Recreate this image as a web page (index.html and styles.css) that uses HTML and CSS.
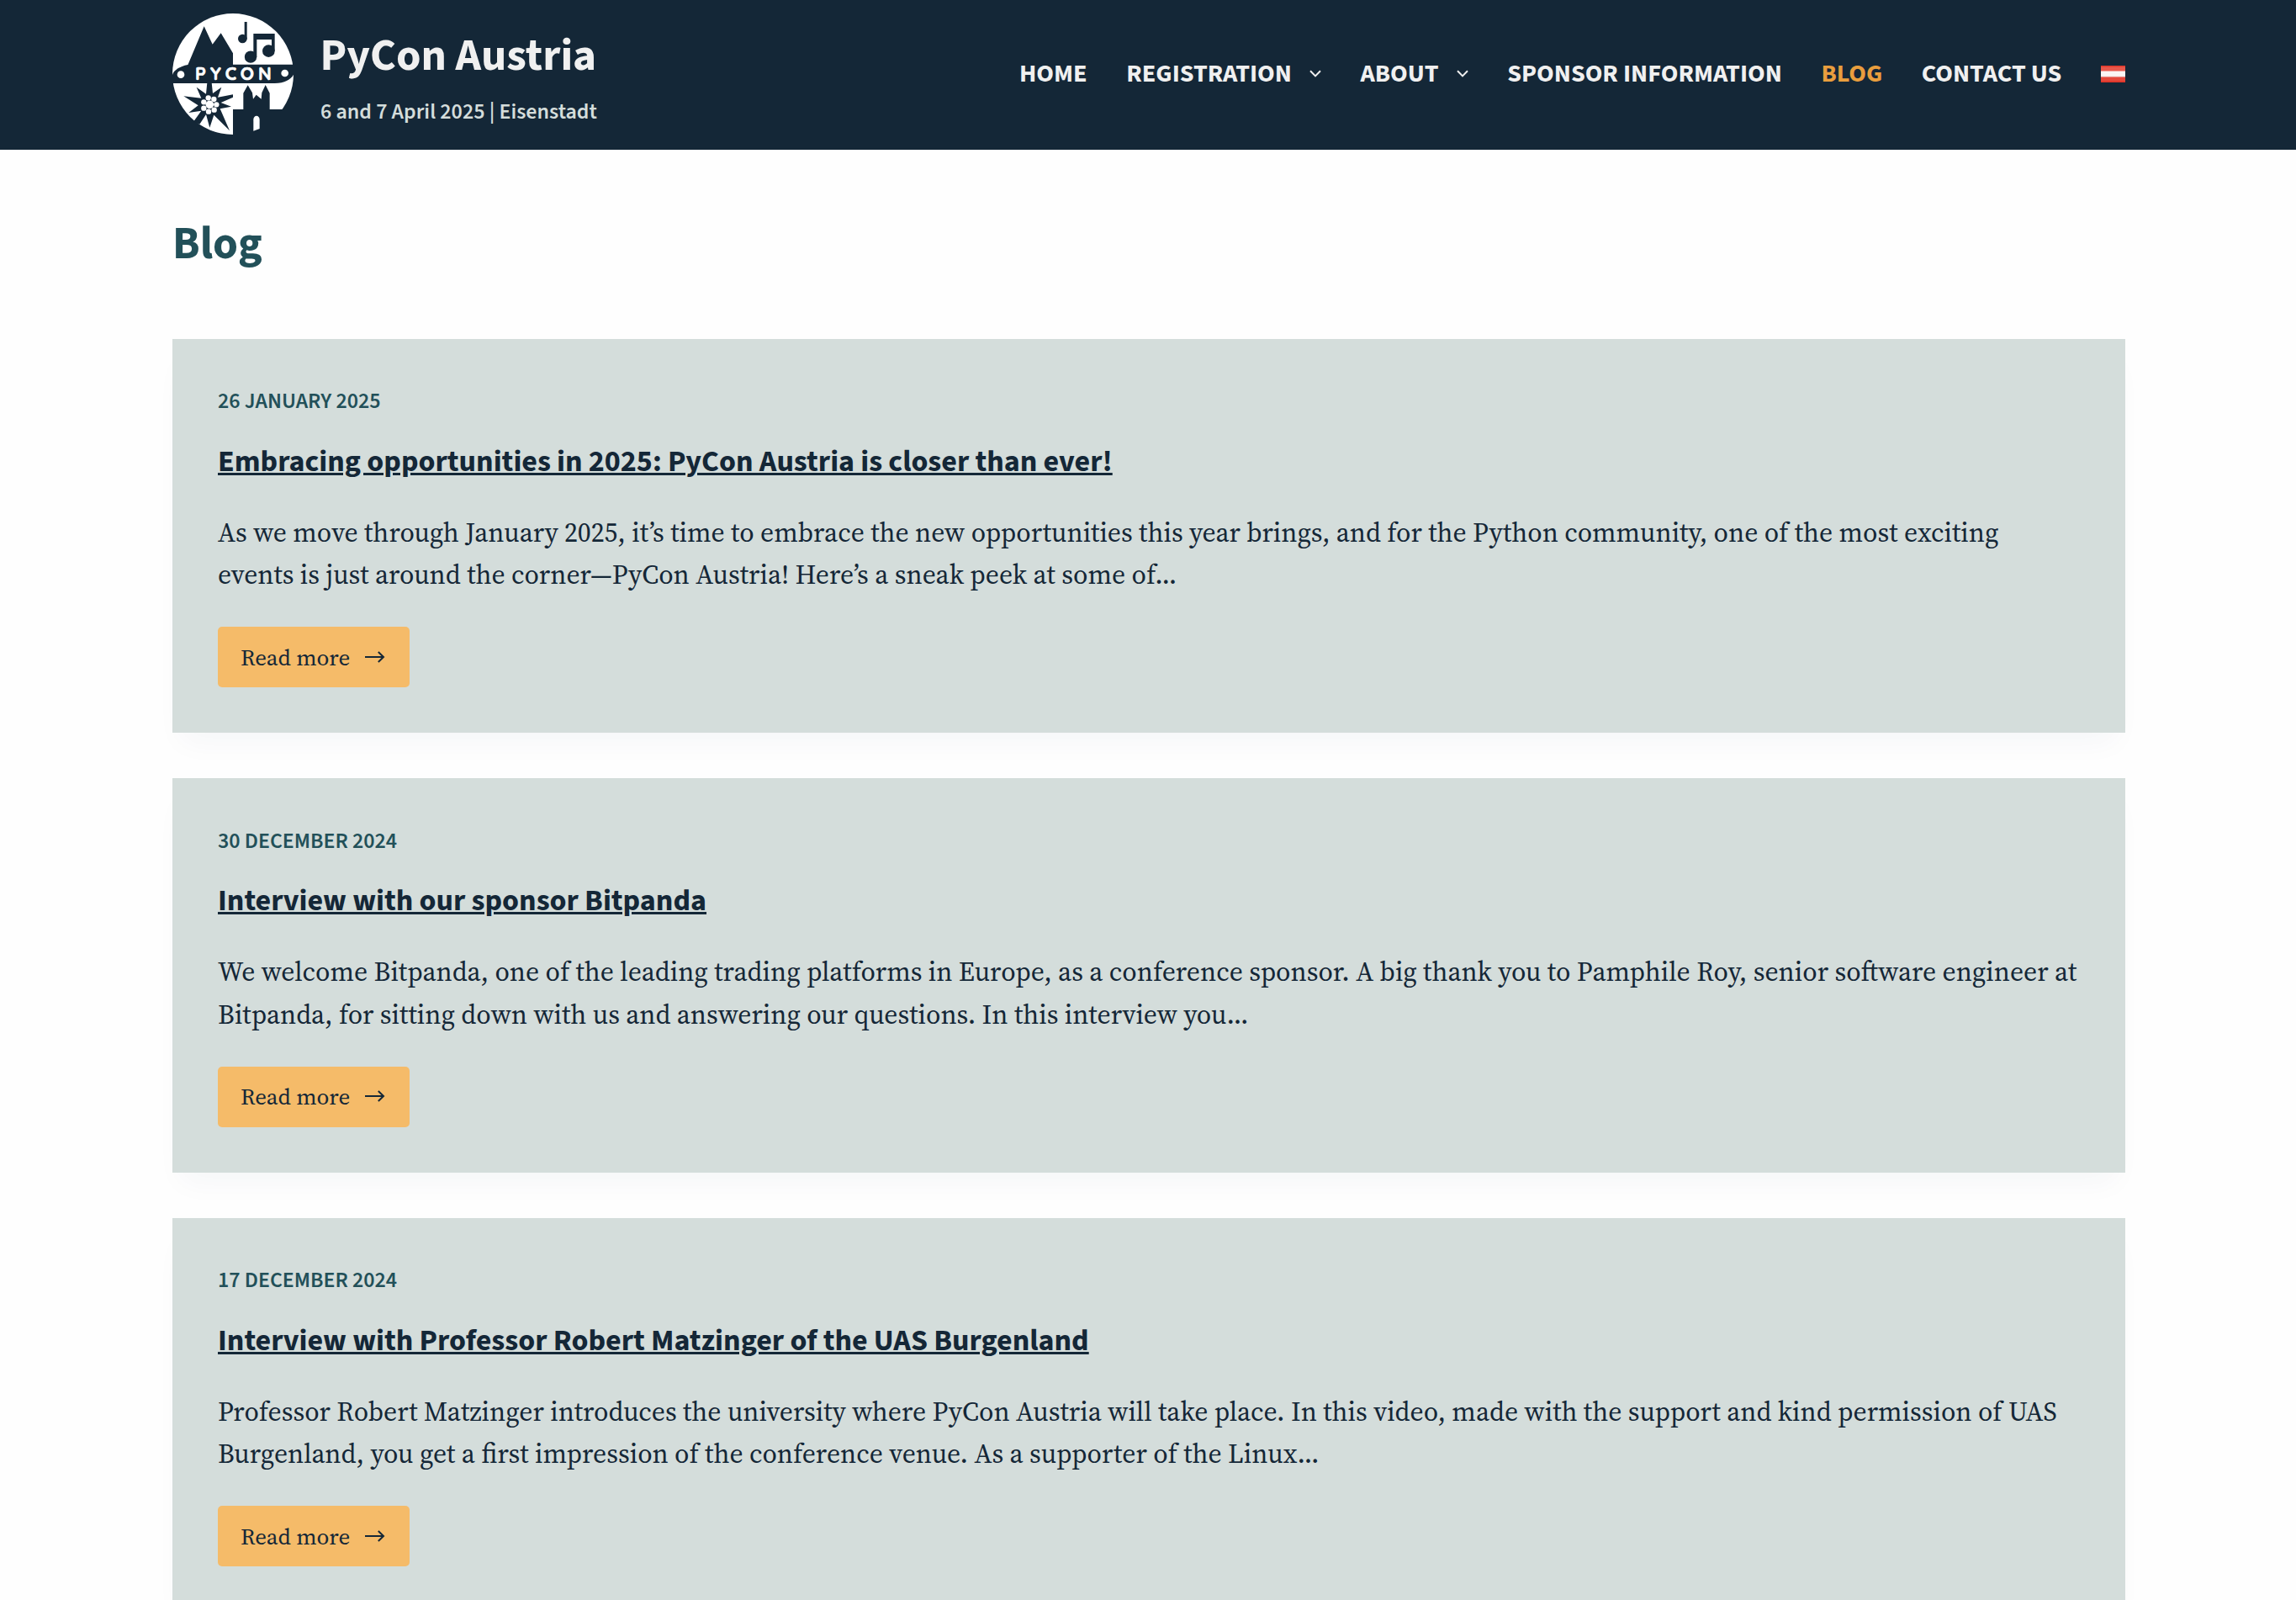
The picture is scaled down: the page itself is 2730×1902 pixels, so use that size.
FILE: index.html
```html
<!DOCTYPE html>
<html lang="en">
<head>
<meta charset="utf-8">
<title>Blog – PyCon Austria</title>
<link rel="stylesheet" href="styles.css">
</head>
<body>
<header class="site-header">
  <div class="container header-row">
    <a class="brand" href="#">
      <svg class="logo" viewBox="30 48 432 432" aria-hidden="true">
        <circle cx="246" cy="264" r="216" fill="#fff"/>
        <g fill="#142737">
          <path d="M85 232L143 94L173 158L203 118L246 190V232Z"/>
          <path d="M85 231C55 237 36 250 30 266V297H395C430 296 452 284 462 266V230H246Z"/>
          <path d="M287 78H296V140H287Z"/><circle cx="280" cy="138" r="16"/>
          <path d="M319 120H395V183H384V141H331V205H319Z"/>
          <circle cx="309" cy="203" r="21.5"/><circle cx="373" cy="182" r="22"/>
          <path d="M154 295H170L174 333L205 311L192 347L246 337V347L203 366L240 380L200 388L234 466L178 410L163 455L150 408L127 443L105 434L133 395L88 402L122 376L70 343L133 350L116 311L150 335Z"/>
          <path d="M246 390H283V332L299 304L315 331L318 353L329 338L347 353L349 331L362 303L377 332V390H462V482H246Z"/>
        </g>
        <g fill="#fff">
          <circle cx="60" cy="266" r="13"/><circle cx="431" cy="261" r="13"/>
          <circle cx="163" cy="373" r="14.5"/>
          <circle cx="158" cy="349" r="9.5"/><circle cx="178" cy="354" r="9.5"/><circle cx="187" cy="373" r="9.5"/><circle cx="179" cy="392" r="9.5"/><circle cx="159" cy="398" r="9.5"/><circle cx="142" cy="386" r="9.5"/><circle cx="142" cy="364" r="9.5"/>
          <path d="M319 467V427C319 409 341 409 341 427V459Z"/>
          <text class="logo-text" x="111 165 218 272 336" y="286">PYCON</text>
        </g>
      </svg>
      <span class="brand-text">
        <span class="site-title">PyCon Austria</span>
        <span class="site-tagline">6 and 7 April 2025 | Eisenstadt</span>
      </span>
    </a>
    <nav class="menu">
      <a href="#">HOME</a>
      <a href="#">REGISTRATION<svg class="chevron" viewBox="0 0 14 9"><path d="M1 1.2L7 7.4L13 1.2"/></svg></a>
      <a href="#">ABOUT<svg class="chevron" viewBox="0 0 14 9"><path d="M1 1.2L7 7.4L13 1.2"/></svg></a>
      <a href="#">SPONSOR INFORMATION</a>
      <a class="active" href="#">BLOG</a>
      <a href="#">CONTACT US</a>
      <a href="#" class="flag" aria-label="Deutsch"></a>
    </nav>
  </div>
</header>
<main class="container">
  <h1 class="page-title">Blog</h1>
  <div class="entries">
    <article class="card">
      <time class="date">26 JANUARY 2025</time>
      <h2 class="card-title"><a href="#">Embracing opportunities in 2025: PyCon Austria is closer than ever!</a></h2>
      <p class="excerpt">As we move through January 2025, it’s time to embrace the new opportunities this year brings, and for the Python community, one of the most exciting events is just around the corner—PyCon Austria! Here’s a sneak peek at some of…</p>
      <a class="button" href="#">Read more<svg class="arrow" viewBox="0 0 24 14"><path d="M0 7H22.5M15.8 1L22 7L15.8 13"/></svg></a>
    </article>
    <article class="card">
      <time class="date">30 DECEMBER 2024</time>
      <h2 class="card-title"><a href="#">Interview with our sponsor Bitpanda</a></h2>
      <p class="excerpt">We welcome Bitpanda, one of the leading trading platforms in Europe, as a conference sponsor. A big thank you to Pamphile Roy, senior software engineer at Bitpanda, for sitting down with us and answering our questions. In this interview you…</p>
      <a class="button" href="#">Read more<svg class="arrow" viewBox="0 0 24 14"><path d="M0 7H22.5M15.8 1L22 7L15.8 13"/></svg></a>
    </article>
    <article class="card">
      <time class="date">17 DECEMBER 2024</time>
      <h2 class="card-title"><a href="#">Interview with Professor Robert Matzinger of the UAS Burgenland</a></h2>
      <p class="excerpt">Professor Robert Matzinger introduces the university where PyCon Austria will take place. In this video, made with the support and kind permission of UAS Burgenland, you get a first impression of the conference venue. As a supporter of the Linux…</p>
      <a class="button" href="#">Read more<svg class="arrow" viewBox="0 0 24 14"><path d="M0 7H22.5M15.8 1L22 7L15.8 13"/></svg></a>
    </article>
  </div>
</main>
</body>
</html>
```
FILE: styles.css
```css
* { box-sizing: border-box; }
body { margin: 0; background: #fefefe; color: #142737; font-family: "Source Serif 4", "Liberation Serif", serif; overflow: hidden; height: 1902px; }
a { color: inherit; text-decoration: none; }
.container { width: 2322px; margin: 0 203px 0 205px; }

/* Header */
.site-header { background: #142737; height: 178px; font-family: "Source Sans 3", "Noto Sans CJK SC", sans-serif; }
.header-row { display: flex; justify-content: space-between; padding-top: 16px; }
.brand { display: flex; gap: 32px; }
.logo { width: 144px; height: 144px; display: block; }
.logo-text { font: 700 64px "Quicksand", "Lato", sans-serif; stroke: #fff; stroke-width: 2; }
.brand-text { display: flex; flex-direction: column; gap: 12px; padding-top: 15px; }
.site-title { margin-left: -0.6px; font-size: 53.28px; line-height: 70px; font-weight: 700; color: #f0f0f0; }
.site-tagline { font-size: 25.92px; line-height: 40px; font-weight: 600; color: #d4dddb; }
.menu { display: flex; align-items: center; gap: 46.6px; height: 143px; font-size: 30.24px; line-height: 40px; font-weight: 700; color: #f0f0f0; }
.menu a { display: flex; align-items: center; }
.menu .active { color: #e99e3e; }
.chevron { width: 14px; height: 9px; margin-left: 21px; fill: none; stroke: #f0f0f0; stroke-width: 2; }
.flag { width: 29px; height: 20px; margin-top: 1px; background: linear-gradient(#e0382a 0 1px, #e8584c 2px 6px, #fbf5f5 7px 12px, #efd9d8 13px, #e5483c 14px 18px, #de3225 19px); }

/* Blog list */
.page-title { margin: 0; padding: 78px 0 77px; font: 700 54px/70px "Source Sans 3", "Noto Sans CJK SC", sans-serif; color: #225059; }
.entries { display: flex; flex-direction: column; gap: 54px; }
.card { display: flex; flex-direction: column; align-items: flex-start; padding: 53.3px 54px 54px; background: #d4dddb; box-shadow: 0 21.6px 32.4px -10.8px rgba(34, 56, 101, .04); }
.date { font: 600 25.92px/42px "Source Sans 3", "Noto Sans CJK SC", sans-serif; color: #225059; }
.card-title { margin: 23.8px 0 31.7px; font: 700 36px/54px "Source Sans 3", "Noto Sans CJK SC", sans-serif; }
.card-title a { text-decoration: underline; text-decoration-thickness: 3px; text-underline-offset: 2px; }
.excerpt { margin: 0 0 36.2px; font-size: 31.68px; line-height: 50.7px; }
.button { display: flex; align-items: center; height: 72px; padding: 0 28.8px 0 27px; border-radius: 5px; background: #f5bb69; font-size: 27px; }
.arrow { width: 24px; height: 14px; margin: 0 0 1px 18px; fill: none; stroke: #142737; stroke-width: 2; }
```
